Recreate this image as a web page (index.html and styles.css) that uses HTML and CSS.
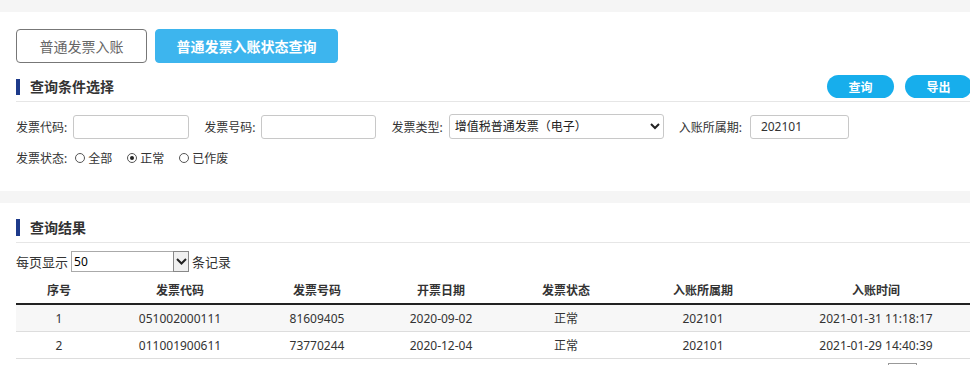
FILE: index.html
```html
<!DOCTYPE html>
<html lang="zh-CN">
<head>
<meta charset="utf-8">
<title>普通发票入账状态查询</title>
<link rel="stylesheet" href="styles.css">
</head>
<body>
<div class="band"></div>
<section class="panel panel-top">
  <div class="tabs">
    <button class="tab">普通发票入账</button>
    <button class="tab tab-active">普通发票入账状态查询</button>
  </div>
  <div class="sec-head">
    <span class="sec-bar"></span>
    <span class="sec-title">查询条件选择</span>
    <div class="actions">
      <button class="pill">查询</button>
      <button class="pill">导出</button>
    </div>
  </div>
  <div class="form-row">
    <div class="field"><span class="lbl">发票代码:</span><input class="inp w116" type="text"></div>
    <div class="field"><span class="lbl">发票号码:</span><input class="inp w115" type="text"></div>
    <div class="field"><span class="lbl">发票类型:</span>
      <select class="sel">
        <option>增值税普通发票（电子）</option>
      </select>
    </div>
    <div class="field"><span class="lbl lbl-wide">入账所属期:</span><input class="inp w99 val" type="text" value="202101"></div>
  </div>
  <div class="form-row radios">
    <span class="lbl">发票状态:</span>
    <label class="radio"><input type="radio" name="st"><span>全部</span></label>
    <label class="radio"><input type="radio" name="st" checked><span>正常</span></label>
    <label class="radio"><input type="radio" name="st"><span>已作废</span></label>
  </div>
</section>
<div class="band"></div>
<section class="panel">
  <div class="sec-head sec-head2">
    <span class="sec-bar"></span>
    <span class="sec-title">查询结果</span>
  </div>
  <div class="pager-size">
    <span>每页显示</span>
    <div class="oldsel">
      <select class="oldsel-inner"><option>50</option></select>
      <span class="oldsel-btn"><svg width="11" height="7" viewBox="0 0 11 7"><path d="M1 1 L5.5 5.5 L10 1" fill="none" stroke="#222" stroke-width="2"/></svg></span>
    </div>
    <span>条记录</span>
  </div>
  <table class="grid">
    <colgroup>
      <col class="c1"><col class="c2"><col class="c3"><col class="c4"><col class="c5"><col class="c6"><col class="c7">
    </colgroup>
    <thead>
      <tr><th>序号</th><th>发票代码</th><th>发票号码</th><th>开票日期</th><th>发票状态</th><th>入账所属期</th><th>入账时间</th></tr>
    </thead>
    <tbody>
      <tr class="odd"><td>1</td><td>051002000111</td><td>81609405</td><td>2020-09-02</td><td>正常</td><td>202101</td><td>2021-01-31 11:18:17</td></tr>
      <tr><td>2</td><td>011001900611</td><td>73770244</td><td>2020-12-04</td><td>正常</td><td>202101</td><td>2021-01-29 14:40:39</td></tr>
    </tbody>
  </table>
  <div class="pagination"><span class="pg-box"></span></div>
</section>
</body>
</html>
```
FILE: styles.css
```css
html, body {
  margin: 0;
  padding: 0;
  background: #fff;
  overflow: hidden;
}
body {
  font-family: "Noto Sans", "Noto Sans CJK SC", sans-serif;
  font-size: 12px;
  color: #333;
  width: 972px;
}
.band {
  height: 12px;
  background: #f5f5f5;
}
.panel {
  padding-left: 16px;
}
.panel-top {
  padding-top: 17px;
  height: 179px;
  box-sizing: border-box;
}
.tabs {
  display: flex;
  gap: 8px;
}
.tab {
  height: 34px;
  border-radius: 4px;
  font-family: inherit;
  font-size: 14px;
  padding: 0;
  cursor: pointer;
}
.tab:first-child {
  width: 131px;
  border: 1px solid #777;
  background: #fff;
  color: #666;
}
.tab-active {
  width: 183px;
  border: 1px solid #3db5ee;
  background: #3db5ee;
  color: #fff;
  font-weight: bold;
}
.sec-head {
  display: flex;
  align-items: flex-start;
  margin-top: 12px;
  height: 27px;
  border-bottom: 1px solid #e6e6e6;
  box-sizing: border-box;
}
.sec-bar {
  width: 4px;
  height: 16px;
  background: #1d3a8a;
  margin-top: 4px;
}
.sec-title {
  margin-left: 10px;
  font-size: 14px;
  font-weight: bold;
  color: #333;
  line-height: 24px;
}
.actions {
  margin-left: auto;
  display: flex;
  gap: 11px;
}
.pill {
  width: 67px;
  height: 23px;
  border: none;
  border-radius: 12px;
  background: #17aeec;
  color: #fff;
  font-family: inherit;
  font-size: 12px;
  font-weight: bold;
  padding: 0;
}
.form-row {
  display: flex;
  align-items: center;
}
.form-row:not(.radios) {
  margin-top: 12px;
  gap: 15px;
}
.field {
  display: flex;
  align-items: center;
}
.lbl {
  margin-right: 6px;
  white-space: nowrap;
}
.lbl-wide {
  margin-right: 8px;
}
.inp {
  height: 24px;
  box-sizing: border-box;
  border: 1px solid #c8c8c8;
  border-radius: 3px;
  font-family: inherit;
  font-size: 12px;
  color: #333;
  padding: 0 10px;
}
.w116 { width: 116px; }
.w115 { width: 115px; }
.w99 { width: 99px; }
.sel {
  width: 215px;
  height: 25px;
  box-sizing: border-box;
  border: 1px solid #c8c8c8;
  border-radius: 3px;
  font-family: inherit;
  font-size: 12px;
  color: #222;
  background: #fff;
  padding: 0 0 0 1px;
}
.radios {
  margin-top: 9px;
  height: 20px;
}
.radios .lbl {
  margin-right: 8px;
}
.radio {
  display: flex;
  align-items: center;
  margin-right: 15px;
}
.radio input {
  appearance: none;
  -webkit-appearance: none;
  width: 10px;
  height: 10px;
  margin: 0 3px 0 0;
  border: 1px solid #555;
  border-radius: 50%;
  box-sizing: border-box;
  display: grid;
  place-content: center;
  background: #fff;
}
.radio input:checked::before {
  content: "";
  width: 4px;
  height: 4px;
  border-radius: 50%;
  background: #222;
}
.sec-head2 {
  margin-top: 10px;
  height: 30px;
}
.sec-head2 .sec-bar {
  height: 17px;
  margin-top: 6px;
}
.sec-head2 .sec-title {
  margin-top: 3px;
}
.pager-size {
  display: flex;
  align-items: center;
  margin-top: 8px;
  font-size: 13px;
  gap: 3px;
  color: #333;
}
.oldsel {
  position: relative;
  width: 118px;
  height: 21px;
}
.oldsel-inner {
  appearance: none;
  -webkit-appearance: none;
  width: 100%;
  height: 100%;
  box-sizing: border-box;
  border: 1px solid #aaa;
  border-radius: 0;
  background: #fff;
  font-family: inherit;
  font-size: 12px;
  color: #000;
  padding: 0 0 0 2px;
}
.oldsel-btn {
  position: absolute;
  right: 0;
  top: 0;
  width: 16px;
  height: 21px;
  box-sizing: border-box;
  border: 1px solid #888;
  background: #f0f0f0;
  display: flex;
  align-items: center;
  justify-content: center;
}
.grid {
  border-collapse: collapse;
  table-layout: fixed;
  width: 956px;
  margin-top: 4px;
  font-size: 12px;
}
.c1 { width: 86px; }
.c2 { width: 156px; }
.c3 { width: 118px; }
.c4 { width: 130px; }
.c5 { width: 120px; }
.c6 { width: 154px; }
.c7 { width: 192px; }
.grid th {
  height: 27px;
  font-weight: bold;
  text-align: center;
  border-bottom: 2px solid #222;
  padding: 0;
}
.grid td {
  height: 26px;
  text-align: center;
  padding: 0;
  border-bottom: 1px solid #ddd;
}
.grid tr.odd td {
  background: #f7f7f7;
}
.pagination {
  display: flex;
  justify-content: flex-end;
  padding-right: 55px;
  margin-top: 4px;
}
.pg-box {
  width: 29px;
  height: 20px;
  border: 1px solid #999;
  box-sizing: border-box;
}
```
